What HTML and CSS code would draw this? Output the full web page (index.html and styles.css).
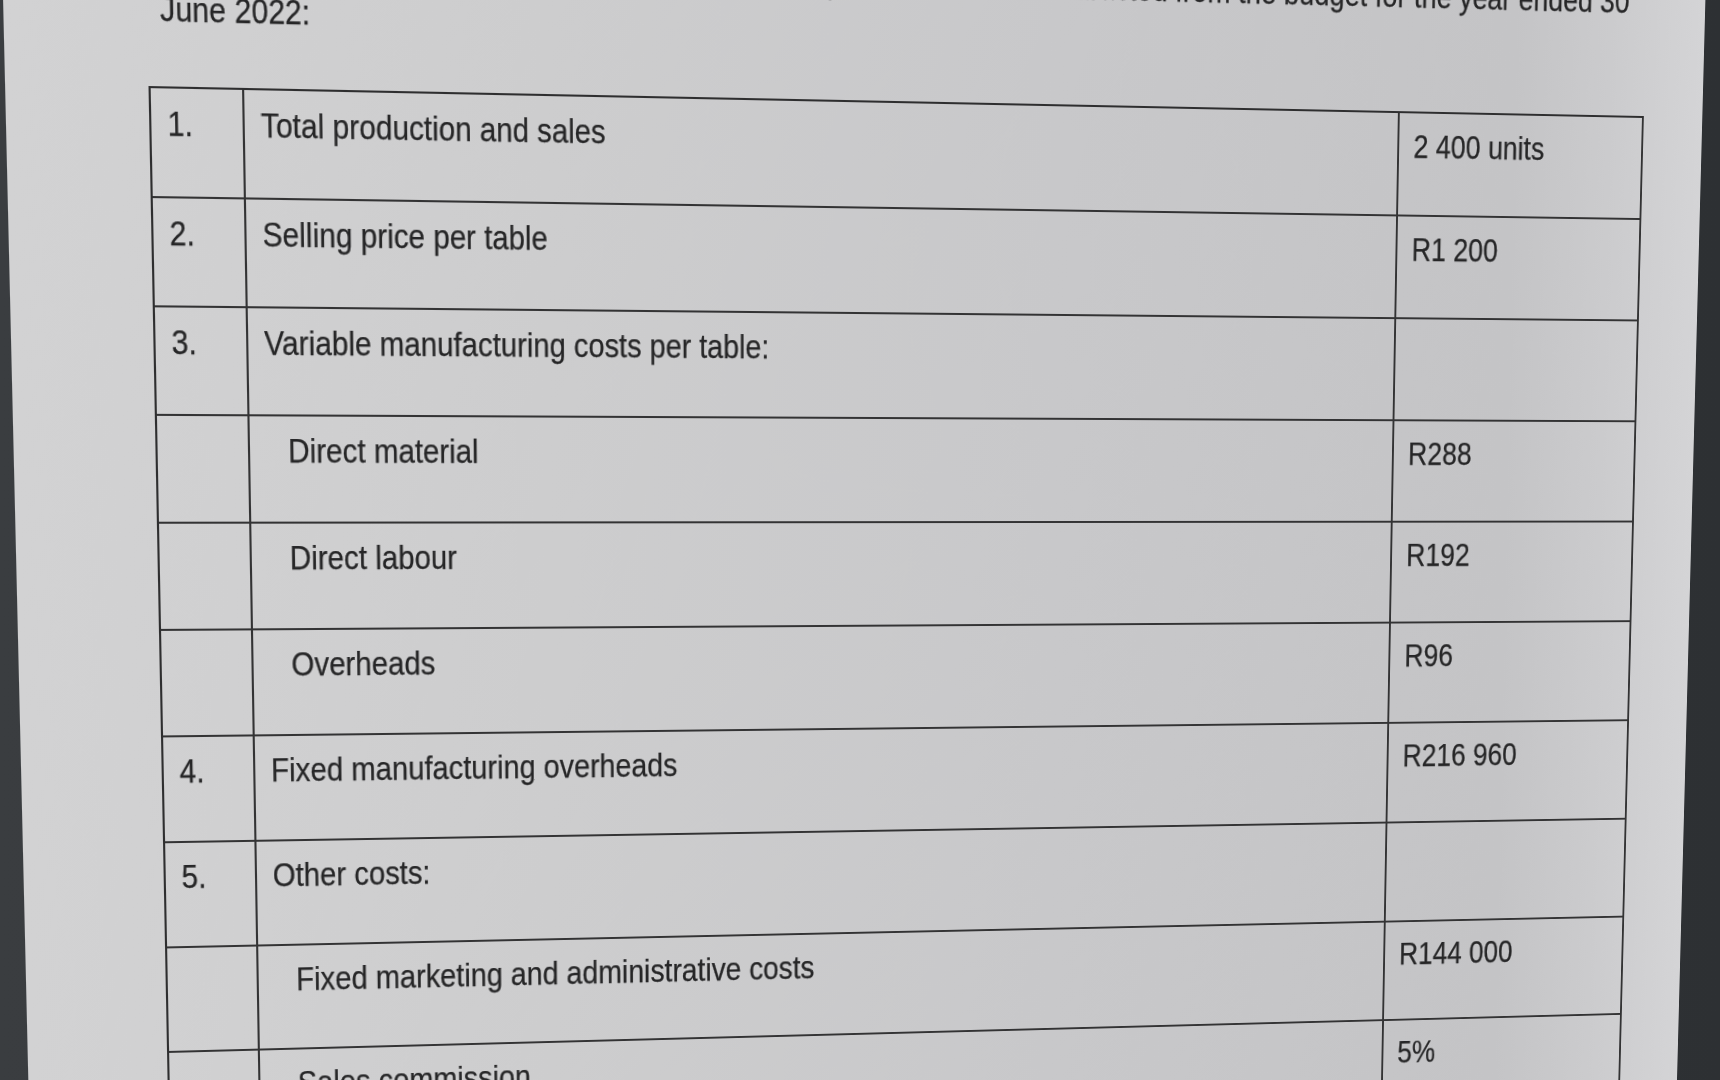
FILE: index.html
```html
<!DOCTYPE html>
<html lang="en">
<head>
<meta charset="utf-8">
<title>Budget information</title>
<link rel="stylesheet" href="styles.css">
</head>
<body>
<div class="stage">
  <div class="screen">
    <div class="intro">
      <p class="intro-line intro-first"><span class="txt">The following information was extracted from the budget for the year ended 30</span></p>
      <p class="intro-line"><span class="txt">June 2022:</span></p>
    </div>
    <div class="budget">
      <div class="row"><div class="cell num"><span class="txt">1.</span></div><div class="cell label"><span class="txt">Total production and sales</span></div><div class="cell value"><span class="txt">2 400 units</span></div></div>
      <div class="row"><div class="cell num"><span class="txt">2.</span></div><div class="cell label"><span class="txt">Selling price per table</span></div><div class="cell value"><span class="txt">R1 200</span></div></div>
      <div class="row"><div class="cell num"><span class="txt">3.</span></div><div class="cell label"><span class="txt">Variable manufacturing costs per table:</span></div><div class="cell value"></div></div>
      <div class="row"><div class="cell num"></div><div class="cell label sub"><span class="txt">Direct material</span></div><div class="cell value"><span class="txt">R288</span></div></div>
      <div class="row"><div class="cell num"></div><div class="cell label sub"><span class="txt">Direct labour</span></div><div class="cell value"><span class="txt">R192</span></div></div>
      <div class="row"><div class="cell num"></div><div class="cell label sub"><span class="txt">Overheads</span></div><div class="cell value"><span class="txt">R96</span></div></div>
      <div class="row"><div class="cell num"><span class="txt">4.</span></div><div class="cell label"><span class="txt">Fixed manufacturing overheads</span></div><div class="cell value"><span class="txt">R216 960</span></div></div>
      <div class="row"><div class="cell num"><span class="txt">5.</span></div><div class="cell label"><span class="txt">Other costs:</span></div><div class="cell value"></div></div>
      <div class="row"><div class="cell num"></div><div class="cell label sub"><span class="txt">Fixed marketing and administrative costs</span></div><div class="cell value"><span class="txt">R144 000</span></div></div>
      <div class="row"><div class="cell num"></div><div class="cell label sub"><span class="txt">Sales commission</span></div><div class="cell value"><span class="txt">5%</span></div></div>
    </div>
  </div>
</div>
</body>
</html>
```

FILE: styles.css
```css
html, body {
  margin: 0;
  padding: 0;
}

body {
  width: 1720px;
  height: 1080px;
  overflow: hidden;
  background: linear-gradient(90deg, #3a3d40 0%, #34373a 50%, #2d3033 100%);
  font-family: "Liberation Sans", Arial, sans-serif;
  color: #262627;
}

.stage {
  display: flow-root;
  width: 1720px;
  height: 1080px;
  transform-origin: 0 0;
  transform: matrix3d(1.098808, 0.026412, 0, 0.0000522538, 0.024972, 1.064661, 0, 0.0000310569, 0, 0, 1, 0, -16.990, -12.866, 0, 1);
}

.screen {
  display: flow-root;
  box-sizing: border-box;
  width: 1687px;
  height: 1178px;
  margin-left: 18px;
  margin-top: -48px;
  background: linear-gradient(90deg, #d2d2d3 0%, #cdcdce 30%, #c8c8ca 60%, #c4c4c6 88%, #cbcbcd 94%, #d4d4d6 100%);
}

.txt {
  display: inline-block;
  transform: scaleX(0.857);
  transform-origin: 0 50%;
  -webkit-text-stroke: 0.25px #262627;
}

.intro {
  padding: 0 81px 0 144px;
}

.intro-line {
  margin: 0;
  font-size: 33px;
  line-height: 43px;
  white-space: nowrap;
}

.intro-first {
  text-align: right;
}

.intro-first .txt {
  transform-origin: 100% 50%;
}

.budget {
  display: grid;
  grid-template-columns: 87px 1144px 259px;
  grid-auto-rows: 105px;
  width: max-content;
  margin: 52px 0 0 132px;
  border-top: 2px solid #2e2e2f;
  border-left: 2px solid #2e2e2f;
}

.row {
  display: contents;
}

.cell {
  box-sizing: border-box;
  border-right: 2px solid #333334;
  border-bottom: 2px solid #333334;
  padding: 14px 10px 0 15px;
  font-size: 33px;
  line-height: 1.2;
  white-space: nowrap;
}

.label.sub {
  padding-left: 36px;
}

.value {
  padding-left: 15px;
}
```
